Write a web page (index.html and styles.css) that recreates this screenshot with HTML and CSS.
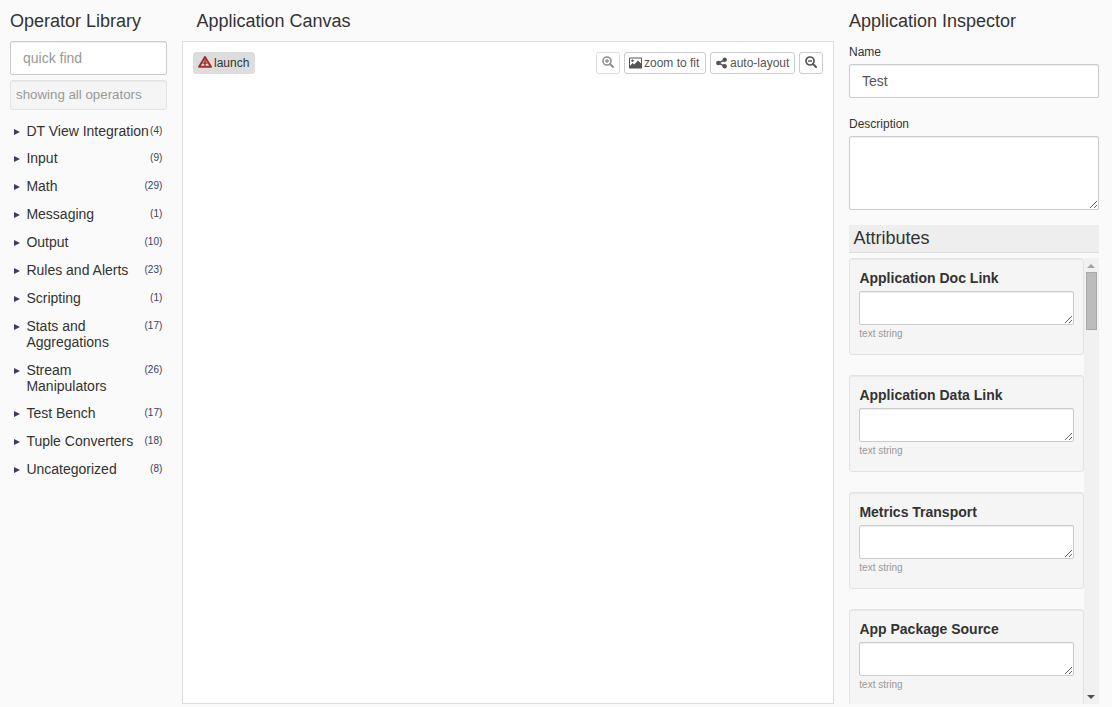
FILE: index.html
```html
<!DOCTYPE html>
<html lang="en">
<head>
<meta charset="utf-8">
<title>Application Canvas</title>
<link rel="stylesheet" href="styles.css">
</head>
<body>
<div class="app">
  <aside class="library">
    <h2>Operator Library</h2>
    <input class="field" type="text" placeholder="quick find">
    <div class="status">showing all operators</div>
    <ul class="operators">
      <li><i class="caret"></i><span class="label nowrap">DT View Integration</span><span class="count">(4)</span></li>
      <li><i class="caret"></i><span class="label">Input</span><span class="count">(9)</span></li>
      <li><i class="caret"></i><span class="label">Math</span><span class="count">(29)</span></li>
      <li><i class="caret"></i><span class="label">Messaging</span><span class="count">(1)</span></li>
      <li><i class="caret"></i><span class="label">Output</span><span class="count">(10)</span></li>
      <li><i class="caret"></i><span class="label">Rules and Alerts</span><span class="count">(23)</span></li>
      <li><i class="caret"></i><span class="label">Scripting</span><span class="count">(1)</span></li>
      <li><i class="caret"></i><span class="label">Stats and Aggregations</span><span class="count">(17)</span></li>
      <li><i class="caret"></i><span class="label">Stream Manipulators</span><span class="count">(26)</span></li>
      <li><i class="caret"></i><span class="label">Test Bench</span><span class="count">(17)</span></li>
      <li><i class="caret"></i><span class="label">Tuple Converters</span><span class="count">(18)</span></li>
      <li><i class="caret"></i><span class="label">Uncategorized</span><span class="count">(8)</span></li>
    </ul>
  </aside>

  <main class="canvas-column">
    <h2>Application Canvas</h2>
    <div class="canvas">
      <div class="toolbar">
        <button class="btn launch">
          <svg width="14" height="12" viewBox="0 0 14 12"><path fill="none" stroke="#a02f2c" stroke-width="2" stroke-linejoin="round" d="M7 1 12.900 10.800H1.100Z"/><path fill="#a02f2c" d="M6.200 3.500h1.600v3H6.200zM4.500 6.500h5v1.300h-5zM6.300 7.500h1.400v2.500H6.300z"/></svg><span>launch</span>
        </button>
        <div class="view-tools">
          <button class="btn icon-only faded" aria-label="zoom in">
            <svg width="12" height="12" viewBox="0 0 12 12"><g fill="none" stroke="#555"><circle cx="5" cy="5" r="4" stroke-width="1.600"/><path stroke-width="2" stroke-linecap="round" d="M8 8l3 3"/><path stroke-width="1.300" d="M3 5h4M5 3v4"/></g></svg>
          </button>
          <button class="btn fit">
            <svg width="13" height="12" viewBox="0 0 13 12"><path fill="#555" fill-rule="evenodd" d="M.8.5h11.400q.8 0 .8.8v9.400q0 .8-.8.8H.8q-.8 0-.8-.8V1.300Q0 .5.8.5ZM1 1.500v7.200L3.700 6l1.500 1.500L9 3.600l3 3V1.500Z"/><circle cx="3.500" cy="3.700" r="1.200" fill="#555"/></svg><span>zoom to fit</span>
          </button>
          <button class="btn layout">
            <svg width="11" height="12" viewBox="0 0 11 12"><g fill="#555"><circle cx="2.300" cy="6" r="2.200"/><circle cx="8.700" cy="2.800" r="2.200"/><circle cx="8.700" cy="9.200" r="2.200"/></g><path fill="none" stroke="#555" stroke-width="1.500" d="M8.700 2.800 2.300 6l6.400 3.200"/></svg><span>auto-layout</span>
          </button>
          <button class="btn icon-only" aria-label="zoom out">
            <svg width="12" height="12" viewBox="0 0 12 12"><g fill="none" stroke="#555"><circle cx="5" cy="5" r="4" stroke-width="1.700"/><path stroke-width="2" stroke-linecap="round" d="M8 8l3 3"/><path stroke-width="1.400" d="M3 5h4"/></g></svg>
          </button>
        </div>
      </div>
    </div>
  </main>

  <aside class="inspector">
    <h2>Application Inspector</h2>
    <label for="app-name">Name</label>
    <input class="field" id="app-name" type="text" value="Test">
    <label class="description-label" for="app-description">Description</label>
    <textarea class="area description" id="app-description"></textarea>
    <h3>Attributes</h3>
    <div class="attributes">
      <div class="cards">
        <section class="card"><h4>Application Doc Link</h4><textarea class="area"></textarea><p>text string</p></section>
        <section class="card"><h4>Application Data Link</h4><textarea class="area"></textarea><p>text string</p></section>
        <section class="card"><h4>Metrics Transport</h4><textarea class="area"></textarea><p>text string</p></section>
        <section class="card"><h4>App Package Source</h4><textarea class="area"></textarea><p>text string</p></section>
      </div>
      <div class="scrollbar">
        <i class="arrow up"></i>
        <i class="thumb"></i>
        <i class="arrow down"></i>
      </div>
    </div>
  </aside>
</div>
</body>
</html>
```
FILE: styles.css
```css
* { box-sizing: border-box; }

body {
  margin: 0;
  height: 707px;
  overflow: hidden;
  background: #fafafa;
  color: #333;
  font-family: "Liberation Sans", Arial, sans-serif;
  font-size: 14px;
}

.app {
  display: grid;
  grid-template-columns: 157px 652px 250px;
  column-gap: 15px;
  height: 707px;
  padding: 10px 13px 3px 10px;
}

.library, .canvas-column, .inspector {
  display: flex;
  flex-direction: column;
  min-width: 0;
  min-height: 0;
}

h2, h3, h4, p, ul { margin: 0; padding: 0; font-weight: 400; }

h2 {
  flex: none;
  height: 31px;
  font-size: 18px;
  line-height: 23px;
}

.field, .area {
  width: 100%;
  border: 1px solid #ccc;
  border-radius: 2px;
  background: #fff;
  box-shadow: inset 0 1px 1px rgba(0, 0, 0, .075);
  color: #555;
  font: 14px/20px "Liberation Sans", Arial, sans-serif;
}

.field { flex: none; height: 34px; padding: 6px 12px; }
.field::placeholder { color: #999; opacity: 1; }
.area { display: block; height: 34px; margin: 0; resize: both; }

.status {
  height: 30px;
  margin-top: 5px;
  padding: 0 5px;
  border: 1px solid #e3e3e3;
  border-radius: 3px;
  background: #f5f5f5;
  box-shadow: inset 0 1px 1px rgba(0, 0, 0, .05);
  color: #999;
  font-size: 13.3px;
  line-height: 28px;
}

.operators { margin-top: 12.53px; list-style: none; }

.operators li {
  display: flex;
  align-items: flex-start;
  margin-bottom: 11.88px;
  padding: 0 4.7px 0 4px;
  line-height: 16px;
}

.caret {
  flex: none;
  margin: 6px 6.4px 0 0;
  border: 3px solid transparent;
  border-left: 6px solid #413a64;
  border-right: 0;
}

.label { flex: 1; min-width: 0; }
.nowrap { white-space: nowrap; }
.count { color: #413a64; font-size: 10px; line-height: 15px; }

.canvas-column h2 { padding-left: 14.4px; }

.canvas {
  flex: 1;
  padding: 10px;
  border: 1px solid #ddd;
  background: #fff;
}

.toolbar, .view-tools { display: flex; }
.toolbar { justify-content: space-between; }
.view-tools { gap: 4px; }

.btn {
  display: flex;
  align-items: center;
  gap: 2px;
  height: 22px;
  padding: 0 5px;
  border: 1px solid #ccc;
  border-radius: 3px;
  background: #fff;
  color: #555;
  font: 12px/18px "Liberation Sans", Arial, sans-serif;
  white-space: nowrap;
}

.btn svg { flex: none; }
.launch { width: 62px; padding: 0 0 0 4px; border-color: #ddd; background: #ddd; color: #333; }
.launch svg { margin-top: -2px; }
.fit { width: 82px; padding: 0 0 0 5px; }
.fit svg { margin-left: -1px; }
.layout { width: 85px; gap: 3px; padding: 0 0 0 5px; }
.icon-only { justify-content: center; width: 24px; padding: 0 0 2px; }
.faded { opacity: .65; }

.inspector label { height: 23px; font-size: 12px; line-height: 23px; }
.inspector .description-label { margin-top: 15px; }
.description { flex: none; height: 74px; }

h3 {
  flex: none;
  height: 28px;
  margin-top: 15px;
  padding-left: 4.4px;
  border-bottom: 1px solid #ddd;
  background: #eee;
  font-size: 18px;
  line-height: 26px;
}

.attributes {
  display: flex;
  flex: 1;
  min-height: 0;
  margin-top: 5px;
  overflow: hidden;
}

.cards { width: 235px; }

.card {
  height: 97px;
  margin-bottom: 20px;
  padding: 9px;
  border: 1px solid #e3e3e3;
  border-radius: 3px;
  background: #f5f5f5;
  box-shadow: inset 0 1px 1px rgba(0, 0, 0, .05);
}

.card h4 { height: 23px; padding-left: .4px; font-size: 14px; font-weight: 700; line-height: 20px; }
.card p { padding-left: .3px; color: #999; font-size: 10px; line-height: 17px; }

.scrollbar {
  display: flex;
  flex-direction: column;
  align-items: center;
  width: 15px;
  background: #f1f1f1;
}

.arrow { margin-right: 1px; border: 4px solid transparent; }
.up { margin-top: 6px; border-top: 0; border-bottom-color: #a3a3a3; }
.thumb { width: 11px; height: 58px; margin-top: 4px; border: 1px solid #a8a8a8; background: #bcbcbc; }
.down { margin: auto 1px 5px 0; border-bottom: 0; border-top-color: #505050; }
```
